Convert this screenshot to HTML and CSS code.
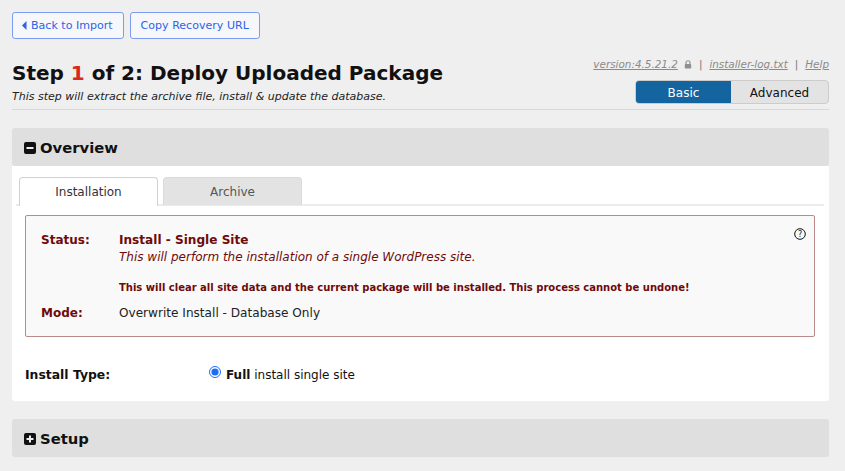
FILE: index.html
```html
<!DOCTYPE html>
<html lang="en">
<head>
<meta charset="utf-8">
<title>Deploy Uploaded Package</title>
<link rel="stylesheet" href="styles.css">
</head>
<body>
<div class="page">
  <nav class="top-actions">
    <a class="btn back" href="#"><svg class="back-icon" viewBox="0 0 5 9" width="5" height="9"><path d="M4.5 0 V9 L0 4.5 Z" fill="#2f62e8"/></svg>Back to Import</a>
    <a class="btn" href="#">Copy Recovery URL</a>
  </nav>
  <header class="head">
    <div class="head-left">
      <h1>Step <span class="num">1</span> of 2: Deploy Uploaded Package</h1>
      <p class="sub">This step will extract the archive file, install &amp; update the database.</p>
    </div>
    <div class="head-right">
      <div class="meta">
        <a href="#">version:4.5.21.2</a>
        <svg class="lock" viewBox="0 0 10 11" width="8" height="9"><path d="M2.5 5V3.3a2.5 2.5 0 0 1 5 0V5" fill="none" stroke="#8f8f8f" stroke-width="1.4"/><rect x="1" y="4.8" width="8" height="5.7" rx="1" fill="#8f8f8f"/></svg>
        <span class="sep">|</span>
        <a href="#">installer-log.txt</a>
        <span class="sep">|</span>
        <a href="#">Help</a>
      </div>
      <div class="switch">
        <span class="switch-on">Basic</span>
        <span class="switch-off">Advanced</span>
      </div>
    </div>
  </header>
  <section class="panel">
    <h2 class="bar"><svg class="box" viewBox="0 0 12 12" width="12" height="12"><rect width="12" height="12" rx="2" fill="#111"/><rect x="2.5" y="5" width="7" height="2" fill="#eee"/></svg><span class="bar-text">Overview</span></h2>
    <div class="body">
      <div class="tabs">
        <span class="tab active">Installation</span>
        <span class="tab">Archive</span>
      </div>
      <div class="status">
        <svg class="help" viewBox="0 0 12 12" width="12" height="12"><circle cx="6" cy="6" r="5.3" fill="none" stroke="#111" stroke-width="1"/><text x="6" y="8.7" text-anchor="middle" class="help-q">?</text></svg>
        <div class="row">
          <div class="label">Status:</div>
          <div class="value">
            <div class="title">Install - Single Site</div>
            <div class="desc">This will perform the installation of a single WordPress site.</div>
            <div class="warn">This will clear all site data and the current package will be installed. This process cannot be undone!</div>
          </div>
        </div>
        <div class="row mode">
          <div class="label">Mode:</div>
          <div class="value plain">Overwrite Install - Database Only</div>
        </div>
      </div>
      <div class="type">
        <div class="type-label">Install Type:</div>
        <label class="type-value"><input type="radio" name="t" checked><span class="type-text"><b>Full</b> install single site</span></label>
      </div>
    </div>
  </section>
  <section class="panel">
    <h2 class="bar"><svg class="box" viewBox="0 0 12 12" width="12" height="12"><rect width="12" height="12" rx="2" fill="#111"/><path d="M5 2.5h2V5h2.5v2H7v2.5H5V7H2.5V5H5z" fill="#eee"/></svg><span class="bar-text">Setup</span></h2>
  </section>
</div>
</body>
</html>
```
FILE: styles.css
```css
* { box-sizing: border-box; }
html, body { margin: 0; padding: 0; height: 100%; overflow: hidden; }
body { background: #efefef; color: #111; font-family: "DejaVu Sans", Verdana, sans-serif; font-size: 12px; }
.page { padding: 12px 16px 0 12px; }
.top-actions { display: flex; gap: 6px; }
.btn { display: flex; align-items: center; height: 27px; padding: 0 10px; border: 1px solid #7d9cf0; border-radius: 3px; background: #f6f7fb; color: #2f62e8; text-decoration: none; font-size: 11.05px; }
.back { padding-left: 9px; }
.back-icon { margin-right: 4px; }
.head { display: flex; justify-content: space-between; align-items: flex-end; margin-top: 16px; padding-bottom: 5px; border-bottom: 1px solid #d8d8d8; height: 55px; }
h1 { margin: 0; font-size: 20px; line-height: 28px; font-weight: 700; color: #111; }
.num { color: #d9291c; }
.sub { margin: 3px 0 0; font-size: 11px; font-style: italic; line-height: 14px; color: #222; }
.head-right { display: flex; flex-direction: column; align-items: flex-end; }
.meta { display: flex; align-items: center; gap: 6px; font-size: 10.4px; font-style: italic; color: #888; margin-bottom: 9px; line-height: 14px; }
.meta a { color: #8a8a8a; text-decoration: underline; }
.sep { font-style: normal; margin: 0 1px; color: #777; }
.switch { display: flex; width: 194px; height: 24px; border: 1px solid #ccc; border-radius: 4px; overflow: hidden; background: #e3e3e3; }
.switch span { display: flex; align-items: center; justify-content: center; padding-top: 1px; font-size: 12px; }
.switch-on { width: 95px; background: #13649f; color: #fff; }
.switch-off { flex: 1; color: #111; }
.panel { margin-top: 18px; }
.bar { display: flex; align-items: center; gap: 4px; margin: 0; height: 38px; padding-left: 12px; background: #dfdfdf; border-radius: 3px; font-size: 14.8px; font-weight: 700; color: #111; }
.box { margin-top: 1px; }
.body { background: #fff; padding: 11px 14px 0 13px; border-radius: 0 0 3px 3px; height: 235px; }
.tabs { display: flex; gap: 5px; height: 29px; border-bottom: 2px solid #ececec; margin: 0 -9px; padding-left: 3px; }
.tab { display: flex; align-items: center; justify-content: center; width: 139px; height: 28px; padding-top: 1px; background: #e3e3e3; border: 1px solid #dadada; border-bottom: 0; border-radius: 4px 4px 0 0; color: #555; font-size: 12px; }
.tab.active { background: #fff; height: 29px; padding-top: 0; border-color: #d0d0d0; color: #333; }
.status { position: relative; margin-top: 9px; height: 122px; padding: 16px 14px 0 15px; background: #f9f9f9; border: 1px solid #b98a8a; border-radius: 2px; color: #6f0a0a; }
.help { position: absolute; top: 12px; right: 8px; }
.help-q { font-size: 8px; font-weight: 400; fill: #111; }
.row { display: flex; }
.label { width: 78px; font-weight: 700; line-height: 16px; }
.title { font-weight: 700; line-height: 16px; font-size: 12.1px; }
.desc { font-style: italic; line-height: 18px; }
.warn { margin-top: 15px; font-size: 10px; font-weight: 700; line-height: 14px; }
.mode { margin-top: 10px; }
.plain { color: #222; line-height: 16px; font-size: 12.1px; }
.type { display: flex; margin-top: 29px; align-items: flex-start; }
.type-label { width: 184px; margin-top: 1px; font-weight: 700; font-size: 12.4px; line-height: 16px; }
.type-value { display: flex; align-items: flex-start; gap: 5px; }
.type-value input { margin: 0; width: 12px; height: 12px; accent-color: #1a6ef5; }
.type-text { margin-top: 2px; }
```
